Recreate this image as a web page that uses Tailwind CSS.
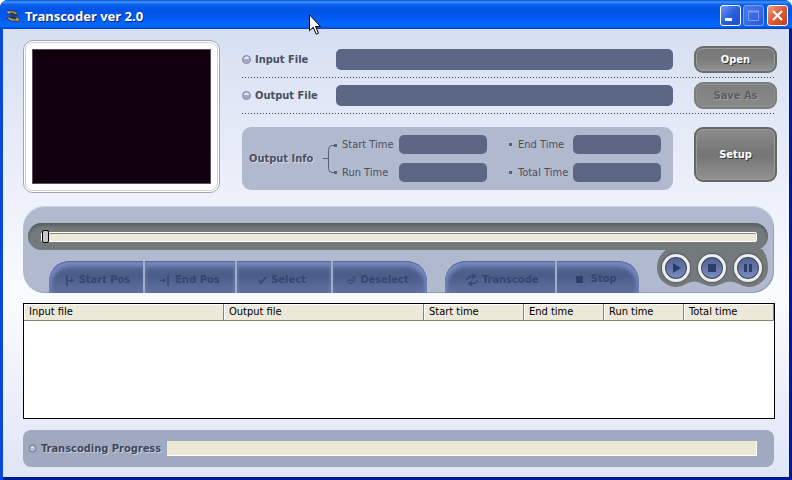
<!DOCTYPE html>
<html lang="en" class="bg-white">
  <head>
    <meta charset="UTF-8" />
    <meta name="viewport" content="width=device-width, initial-scale=1.0" />
    <title>Transcoder ver 2.0</title>
    <script src="https://cdn.jsdelivr.net/npm/@tailwindcss/browser@4"></script>
  </head>
  <body
    class="relative flex flex-col min-h-screen bg-[#0a48dc] rounded-t-lg overflow-hidden font-['DejaVu_Sans_Condensed','DejaVu_Sans',sans-serif] text-[11px] leading-4 text-[#4b5060]"
  >
    <!-- title bar -->
    <header
      class="flex items-center h-[29px] pl-[7px] pr-1 pt-0.5 bg-linear-[180deg,#0a4fd0_0%,#3a94ff_7%,#0a5fee_16%,#0054e3_35%,#005af0_60%,#0468ff_85%,#0562f5_92%,#003cb8_100%]"
    >
      <svg class="w-3 h-3 mr-1.5" viewBox="0 0 12 12" fill="none">
        <path d="M0 3V0l2 1h5l4 3-2 1-3-2H3l1 2z" fill="#caa064" stroke="#222" stroke-width=".7" />
        <path d="M12 8v4l-2-1H4L0 8l2-1 4 2h3L8 7z" fill="#caa064" stroke="#222" stroke-width=".7" />
        <path d="M4 5h6M3 7h5" stroke="#333" stroke-width="1.3" />
      </svg>
      <h1
        class="grow font-['Noto_Sans','Open_Sans',sans-serif] text-[13px] font-bold text-white [text-shadow:1px_1px_0_#0a2a80]"
      >
        Transcoder ver 2.0
      </h1>
      <div class="flex gap-0.5">
        <button
          aria-label="Minimize"
          class="w-[21px] h-[21px] rounded-[3px] border border-white bg-linear-to-br from-[#6f97f5] via-[#2a5fe0] to-[#1c4bd0]"
        >
          <svg viewBox="0 0 19 19"><path d="M4 12h7v3H4z" fill="#fff" /></svg>
        </button>
        <button
          aria-label="Maximize"
          class="w-[21px] h-[21px] rounded-[3px] border border-[#7fa0ec] bg-linear-to-br from-[#4a7cf0] to-[#2658dc]"
        >
          <svg viewBox="0 0 19 19" fill="none" stroke="#7d9cec">
            <path d="M4.500 5.500h10v9h-10z" />
            <path d="M4 5.500h11" stroke-width="2" />
          </svg>
        </button>
        <button
          aria-label="Close"
          class="w-[21px] h-[21px] ml-px rounded-[3px] border border-white bg-linear-to-br from-[#f09a80] via-[#dd5a35] to-[#c43c14]"
        >
          <svg viewBox="0 0 19 19"><path d="M5 5l9 9M14 5l-9 9" stroke="#fff" stroke-width="2.200" /></svg>
        </button>
      </div>
    </header>

    <main
      class="grow flex flex-col ml-[3px] pl-5 pr-[15px] pt-[11px] pb-[10px] bg-linear-[180deg,#d6dff1_0%,#eef1fb_38%,#fafbff_60%,#eef0fa_80%,#dfe5f6_100%] border-r-3 border-b-3 border-[#00189a]"
    >
      <section class="flex gap-[22px]">
        <!-- video preview -->
        <div class="shrink-0 w-[197px] h-[153px] p-px rounded-[10px] bg-white border border-[#a3a6b0]">
          <div class="h-full p-[6px] rounded-lg border border-[#d0d2d8]">
            <div class="h-full bg-[#12000f] border border-[#5a5058]"></div>
          </div>
        </div>

        <div class="grow pt-0.5 -mr-[3px]">
          <div class="flex items-center h-[35px]">
            <svg class="w-[9px] h-[9px] mr-1" viewBox="0 0 9 9">
              <circle cx="4.500" cy="4.500" r="4" fill="#a2a9c4" stroke="#858ca6" />
              <path d="M2 4a2.500 2.500 0 0 1 5 0z" fill="#e3e7f4" />
            </svg>
            <label for="input-file" class="w-[81px] font-bold">Input File</label>
            <input id="input-file" class="grow min-w-0 h-[21px] px-2 rounded-[5px] bg-[#5c6786] text-white" />
            <button
              class="shrink-0 w-[83px] h-[27px] ml-[21px] rounded-[9px] border-2 border-[#6c6c6c] bg-linear-to-b from-[#777] via-[#7d7d7d] to-[#929292] shadow-[inset_0_0_0_1px_#9a9a9a] font-bold text-white [text-shadow:1px_1px_0_#333]"
            >
              Open
            </button>
          </div>
          <div class="h-px mr-[3px] bg-[repeating-linear-gradient(90deg,#3a3f4c_0px_1px,transparent_1px_3px)]"></div>
          <div class="flex items-center h-[35px]">
            <svg class="w-[9px] h-[9px] mr-1" viewBox="0 0 9 9">
              <circle cx="4.500" cy="4.500" r="4" fill="#a2a9c4" stroke="#858ca6" />
              <path d="M2 4a2.500 2.500 0 0 1 5 0z" fill="#e3e7f4" />
            </svg>
            <label for="output-file" class="w-[81px] font-bold">Output File</label>
            <input id="output-file" class="grow min-w-0 h-[21px] px-2 rounded-[5px] bg-[#5c6786] text-white" />
            <button
              disabled
              class="shrink-0 w-[83px] h-[27px] ml-[21px] rounded-[9px] border-2 border-[#7c7c7c] bg-linear-to-b from-[#7e7e7e] to-[#8a8a8a] shadow-[inset_0_0_0_1px_#929292] font-bold text-[#5c5c5c] [text-shadow:1px_1px_0_#a0a0a0]"
            >
              Save As
            </button>
          </div>
          <div class="h-px mr-[3px] bg-[repeating-linear-gradient(90deg,#3a3f4c_0px_1px,transparent_1px_3px)]"></div>

          <div class="flex items-start mt-[13px]">
            <div class="grow flex items-center h-[63px] pl-[7px] pr-3 rounded-[9px] bg-[#b1b9cf]">
              <h2 class="shrink-0 w-[74px] font-bold whitespace-nowrap [text-shadow:1px_1px_0_#d5daea]">Output Info</h2>
              <svg class="shrink-0 w-[14px] h-8 mr-[5px]" viewBox="0 0 14 32" fill="none" stroke="#5a6072">
                <path d="M0 15.500h5M14 2.500h-5q-3.500 .5-3.500 4v19q0 3.500 3.500 4h5" />
                <path d="M11 1h3v3h-3zM11 28h3v3h-3z" fill="#5a6072" stroke="none" />
              </svg>
              <div class="grow grid grid-cols-[57px_minmax(0,1fr)_31px_55px_minmax(0,1fr)] gap-y-[9px] items-center whitespace-nowrap">
                <label for="start-time">Start Time</label>
                <input id="start-time" class="w-full h-[19px] px-2 rounded-[5px] bg-[#5c6786] text-white" />
                <i class="w-[3px] h-[3px] ml-[22px] bg-[#5a6072]"></i>
                <label for="end-time">End Time</label>
                <input id="end-time" class="w-full h-[19px] px-2 rounded-[5px] bg-[#5c6786] text-white" />
                <label for="run-time">Run Time</label>
                <input id="run-time" class="w-full h-[19px] px-2 rounded-[5px] bg-[#5c6786] text-white" />
                <i class="w-[3px] h-[3px] ml-[22px] bg-[#5a6072]"></i>
                <label for="total-time">Total Time</label>
                <input id="total-time" class="w-full h-[19px] px-2 rounded-[5px] bg-[#5c6786] text-white" />
              </div>
            </div>
            <button
              class="shrink-0 w-[83px] h-[55px] ml-[21px] rounded-[9px] border-2 border-[#666] bg-linear-to-b from-[#8c8c8c] via-[#757575] to-[#929292] shadow-[inset_0_0_0_1px_#9a9a9a] font-bold text-white [text-shadow:1px_1px_0_#333]"
            >
              Setup
            </button>
          </div>
        </div>
      </section>

      <!-- position slider and playback -->
      <section
        class="flex flex-col h-[87px] mt-[13px] pt-[17px] pl-[5px] pr-[6px] rounded-[22px] bg-[#b0b9ce] shadow-[inset_0_1px_0_#cdd4e4,inset_-1px_-1px_0_#959db2]"
      >
        <div class="flex items-center h-[27px] shrink-0 pl-[13px] pr-[11px] rounded-full bg-[#74797c] shadow-[inset_0_3px_3px_#5c6063]">
          <input
            type="range"
            value="0"
            aria-label="Position"
            class="w-full h-[10px] appearance-none rounded-xs border border-white bg-[#ece9d8] shadow-[inset_0_1px_0_#8a8a80] [&::-webkit-slider-thumb]:appearance-none [&::-webkit-slider-thumb]:w-[7px] [&::-webkit-slider-thumb]:h-[13px] [&::-webkit-slider-thumb]:rounded-[2px] [&::-webkit-slider-thumb]:border [&::-webkit-slider-thumb]:border-black [&::-webkit-slider-thumb]:bg-[#c4c6c8]"
          />
        </div>
        <div class="grow flex items-end pl-[21px] font-bold text-[#36456f] whitespace-nowrap [text-shadow:1px_1px_0_#7485b4]">
          <div class="grow-378 basis-0 flex gap-0.5 h-8 rounded-t-[20px] overflow-hidden bg-[#a3acc6]">
            <button disabled class="grow basis-0 flex items-center justify-center gap-1 pl-1 pt-1.5 rounded-tl-[20px] bg-linear-to-b from-[#5a6a9a] via-[#4c5c88] via-45% to-[#5f70a2] shadow-[inset_0_1px_1px_#56669a,inset_2px_5px_4px_#788bc0]">
              <svg class="w-[9px] h-[11px]" viewBox="0 0 9 11" stroke="currentColor" fill="currentColor"><path d="M1 0v11" stroke-width="1.500" /><path d="M2 5.500h4" /><path d="M5 3l3 2.500L5 8z" stroke="none" /></svg>
              Start Pos
            </button>
            <button disabled class="grow basis-0 flex items-center justify-center gap-1.5 pt-1.5 bg-linear-to-b from-[#5a6a9a] via-[#4c5c88] via-45% to-[#5f70a2] shadow-[inset_0_1px_1px_#56669a,inset_0_5px_4px_#788bc0]">
              <svg class="w-[9px] h-[11px]" viewBox="0 0 9 11" stroke="currentColor" fill="currentColor"><path d="M8 0v11" stroke-width="1.500" /><path d="M0 5.500h4" /><path d="M3 3l3 2.500L3 8z" stroke="none" /></svg>
              End Pos
            </button>
            <button disabled class="grow basis-0 flex items-center justify-center gap-1 pr-1 pt-1.5 bg-linear-to-b from-[#5a6a9a] via-[#4c5c88] via-45% to-[#5f70a2] shadow-[inset_0_1px_1px_#56669a,inset_0_5px_4px_#788bc0]">
              <svg class="w-[9px] h-[9px]" viewBox="0 0 9 9" fill="none" stroke="currentColor" stroke-width="1.800"><path d="M1 4l2 3 5-6" /></svg>
              Select
            </button>
            <button disabled class="grow basis-0 flex items-center justify-center gap-1 pr-1 pt-1.5 rounded-tr-[20px] bg-linear-to-b from-[#5a6a9a] via-[#4c5c88] via-45% to-[#5f70a2] shadow-[inset_0_1px_1px_#56669a,inset_-2px_5px_4px_#788bc0]">
              <svg class="w-[9px] h-[9px]" viewBox="0 0 9 9" fill="none" stroke="currentColor"><path d="M.5 4.500L2 3.500l1.500 1.500L7 .5l1.500 1L4 8H3z" /></svg>
              Deselect
            </button>
          </div>
          <div class="grow-194 basis-0 flex gap-0.5 h-8 mx-[18px] rounded-t-[20px] overflow-hidden bg-[#a3acc6]">
            <button disabled class="grow-111 basis-0 flex items-center justify-center gap-1 pl-1 pt-1.5 rounded-tl-[20px] bg-linear-to-b from-[#5a6a9a] via-[#4c5c88] via-45% to-[#5f70a2] shadow-[inset_0_1px_1px_#56669a,inset_2px_5px_4px_#788bc0]">
              <svg class="w-3 h-3" viewBox="0 0 12 12" fill="none" stroke="currentColor" stroke-width="1.300">
                <path d="M1 6q0-3.500 4-3.500h3M6 0l3 2.500L6 5" />
                <path d="M11 6q0 3.500-4 3.500H4M6 7L3 9.500 6 12" />
              </svg>
              Transcode
            </button>
            <button disabled class="grow-81 basis-0 flex items-center justify-center gap-2 pr-1 pt-1 rounded-tr-[20px] bg-linear-to-b from-[#5a6a9a] via-[#4c5c88] via-45% to-[#5f70a2] shadow-[inset_0_1px_1px_#56669a,inset_-2px_5px_4px_#788bc0]">
              <i class="w-[7px] h-[7px] bg-[#2f3e68]"></i>
              Stop
            </button>
          </div>
          <!-- the gray holder runs up into the slider groove -->
          <div class="relative shrink-0 w-[111px] h-[45px] -mt-0.5">
            <svg class="w-[111px] h-10" viewBox="0 0 111 40" fill="#74797c">
              <path d="M10 1H105Q111 8 111 20A19 19 0 0 1 82 36Q73 31 64 36A19 19 0 0 1 46 36Q37 31 29 36A19 19 0 0 1 0 20Q0 8 10 1z" />
            </svg>
            <div class="absolute inset-x-0 top-[6px] flex justify-between pl-[5px] pr-[6px]">
              <button aria-label="Play" class="w-[28px] h-[28px] rounded-full border-3 border-[#eceef0] bg-linear-to-b from-[#51628f] to-[#7b8dbf] shadow-[0_0_1px_1px_#55595c,inset_0_0_0_1px_#3c4459]">
                <svg viewBox="0 0 22 22"><path d="M8 6l8 5-8 5z" fill="#2c3d6c" /></svg>
              </button>
              <button aria-label="Stop" class="w-[28px] h-[28px] rounded-full border-3 border-[#eceef0] bg-linear-to-b from-[#51628f] to-[#7b8dbf] shadow-[0_0_1px_1px_#55595c,inset_0_0_0_1px_#3c4459]">
                <svg viewBox="0 0 22 22"><path d="M7 7h8v8H7z" fill="#2c3d6c" /></svg>
              </button>
              <button aria-label="Pause" class="w-[28px] h-[28px] rounded-full border-3 border-[#eceef0] bg-linear-to-b from-[#51628f] to-[#7b8dbf] shadow-[0_0_1px_1px_#55595c,inset_0_0_0_1px_#3c4459]">
                <svg viewBox="0 0 22 22"><path d="M7 7h3v8H7zM12 7h3v8h-3z" fill="#2c3d6c" /></svg>
              </button>
            </div>
          </div>
        </div>
      </section>

      <!-- job list -->
      <section class="grow mt-[10px] -mr-px bg-white border border-black text-black">
        <table class="w-full table-fixed border-separate border-spacing-0">
          <thead>
            <tr class="h-[17px] text-left bg-[#ece9d8]">
              <th class="w-[200px] pl-[5px] font-normal border-r border-b border-[#858475] shadow-[inset_1px_1px_0_#fff]">Input file</th>
              <th class="w-[200px] pl-[5px] font-normal border-r border-b border-[#858475] shadow-[inset_1px_1px_0_#fff]">Output file</th>
              <th class="w-[100px] pl-[5px] font-normal border-r border-b border-[#858475] shadow-[inset_1px_1px_0_#fff]">Start time</th>
              <th class="w-[80px] pl-[5px] font-normal border-r border-b border-[#858475] shadow-[inset_1px_1px_0_#fff]">End time</th>
              <th class="w-[80px] pl-[5px] font-normal border-r border-b border-[#858475] shadow-[inset_1px_1px_0_#fff]">Run time</th>
              <th class="pl-[5px] font-normal border-r border-b border-[#858475] shadow-[inset_1px_1px_0_#fff]">Total time</th>
            </tr>
          </thead>
          <tbody></tbody>
        </table>
      </section>

      <footer class="flex items-center h-[37px] mt-[11px] pl-[5px] pr-[17px] rounded-lg bg-[#a1a9c0]">
        <svg class="w-[9px] h-[9px] mr-1" viewBox="0 0 9 9">
          <circle cx="4.500" cy="4.500" r="3.500" fill="#b4bbd0" stroke="#6d7794" />
          <path d="M3 4a1.500 1.500 0 0 1 3 0z" fill="#e3e7f4" />
        </svg>
        <label for="progress" class="w-[126px] font-bold whitespace-nowrap text-[#3f465a] [text-shadow:1px_1px_0_#c8cee0]">Transcoding Progress</label>
        <progress
          id="progress"
          value="0"
          max="100"
          class="grow min-w-0 h-[15px] appearance-none border-r border-b border-white [&::-webkit-progress-bar]:bg-[#ebe8d6] [&::-webkit-progress-value]:bg-[#5c6786]"
        ></progress>
      </footer>
    </main>

    <!-- mouse pointer -->
    <svg class="absolute left-[309px] top-[14px] w-3 h-[21px]" viewBox="0 0 12 21">
      <path d="M.5.8v16l3.700-3.600 3 7 2.300-1-3-6.700h5z" fill="#fff" stroke="#000" />
    </svg>
  </body>
</html>
